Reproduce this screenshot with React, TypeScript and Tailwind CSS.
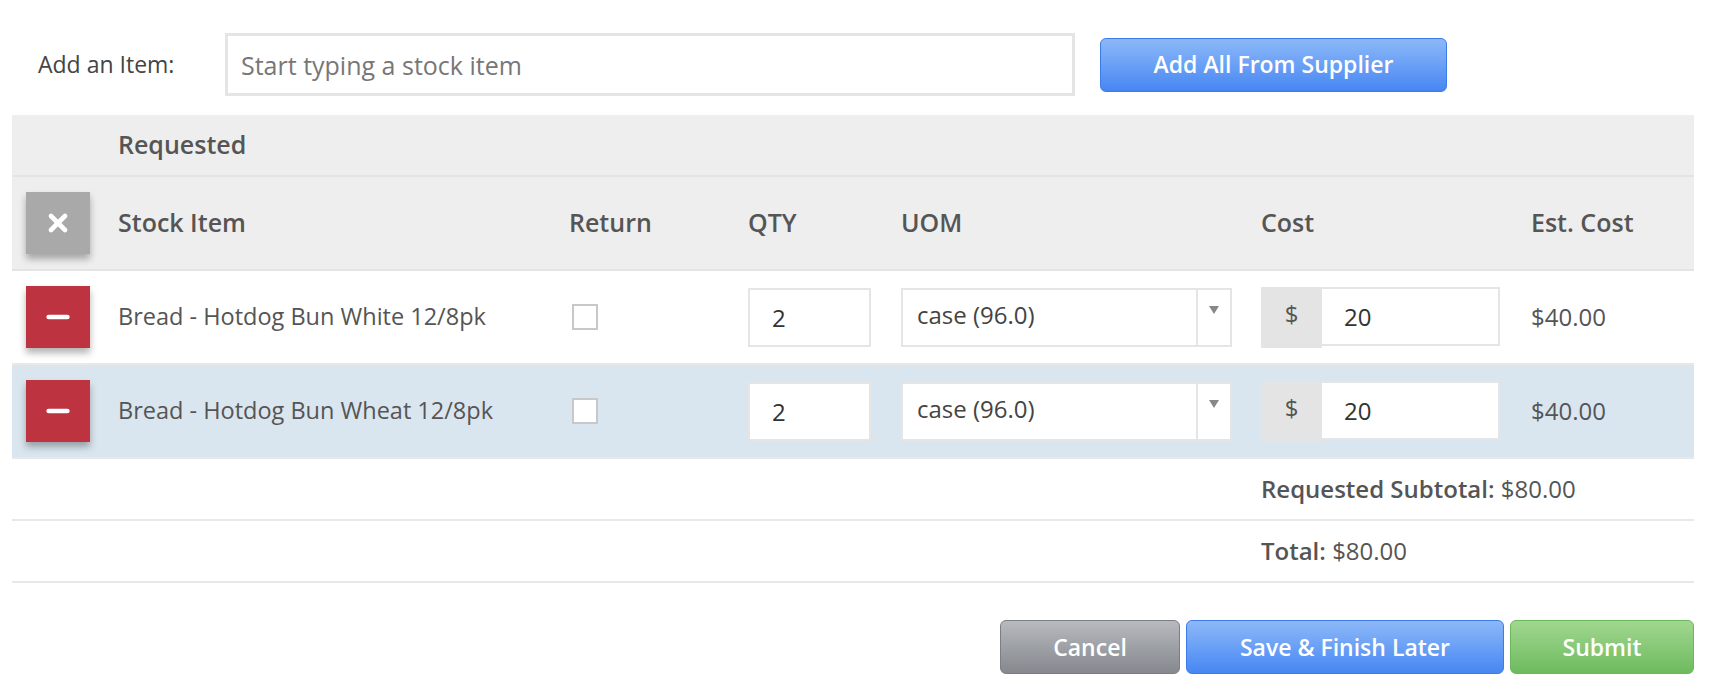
import { X, Minus } from 'lucide-react';

const cols = 'grid grid-cols-[106px_451px_179px_153px_360px_270px_1fr] items-center';

const items = [
    { name: 'Bread - Hotdog Bun White 12/8pk', qty: '2', uom: 'case (96.0)', cost: '20', est: '$40.00', bg: 'bg-white' },
    { name: 'Bread - Hotdog Bun Wheat 12/8pk', qty: '2', uom: 'case (96.0)', cost: '20', est: '$40.00', bg: 'bg-[#dae6ef]' },
];

export default function App() {
    return (
        <div className="w-[1712px] h-[698px] bg-white text-[#555] font-['Open_Sans',sans-serif] pl-[12px] pr-[18px] pt-[33px]">
            {/* add item bar */}
            <div className="flex items-center h-[63px]">
                <label className="w-[213px] pl-[26px] text-[23px] text-[#444]">Add an Item:</label>
                <input
                    placeholder="Start typing a stock item"
                    className="w-[850px] h-[63px] border-[3px] border-[#e5e5e5] px-[13px] text-[25px] text-[#333] placeholder:text-[#777] outline-none"
                />
                <button className="ml-[25px] w-[347px] h-[54px] rounded-[6px] border border-[#3d7be6] bg-gradient-to-b from-[#8cb8f8] to-[#4786f2] text-white text-[23px] font-semibold">
                    Add All From Supplier
                </button>
            </div>

            <div className="mt-[19px]">
                {/* header */}
                <div className="bg-[#eeeeee]">
                    <div className="h-[62px] flex items-center pl-[106px] border-b-2 border-[#e4e4e4] text-[25px] font-semibold">
                        Requested
                    </div>
                    <div className={`${cols} h-[94px] text-[25px] font-semibold border-b-2 border-[#e4e4e4]`}>
                        <div className="pl-[14px]">
                            <div className="w-[64px] h-[62px] bg-[#a9a9a9] flex items-center justify-center shadow-[0_5px_7px_rgba(0,0,0,0.3)]">
                                <X size={28} strokeWidth={4} className="text-white" />
                            </div>
                        </div>
                        <div>Stock Item</div>
                        <div>Return</div>
                        <div>QTY</div>
                        <div>UOM</div>
                        <div>Cost</div>
                        <div>Est. Cost</div>
                    </div>
                </div>

                {/* rows */}
                {items.map((it, i) => (
                    <div key={i} className={`${cols} h-[94px] ${it.bg} border-b-2 border-[#e8e8e8] text-[24px]`}>
                        <div className="pl-[14px]">
                            <div className="w-[64px] h-[62px] bg-[#be3340] flex items-center justify-center shadow-[0_5px_7px_rgba(0,0,0,0.3)]">
                                <Minus size={32} strokeWidth={3.5} className="text-white" />
                            </div>
                        </div>
                        <div className="text-[23.5px]">{it.name}</div>
                        <div className="pl-[3px]">
                            <div className="w-[26px] h-[26px] border-2 border-[#c8c8c8] bg-white" />
                        </div>
                        <div>
                            <input
                                defaultValue={it.qty}
                                className="w-[123px] h-[59px] border-2 border-[#e5e5e5] bg-white px-[22px] text-[24px] text-[#333] outline-none"
                            />
                        </div>
                        <div>
                            <div className="w-[331px] h-[59px] border-2 border-[#e5e5e5] bg-white flex">
                                <div className="flex-1 px-[14px] pt-[7px] text-[24px] text-[#444]">{it.uom}</div>
                                <div className="w-[34px] border-l-2 border-[#e5e5e5] flex justify-center pt-[16px]">
                                    <svg width="10" height="8" viewBox="0 0 10 8">
                                        <path d="M0 0 H10 L5 8 Z" fill="#888" />
                                    </svg>
                                </div>
                            </div>
                        </div>
                        <div className="flex items-start">
                            <div className="w-[61px] h-[61px] bg-[#e4e4e4] flex items-center justify-center text-[24px] text-[#555] pb-[6px]">
                                $
                            </div>
                            <input
                                defaultValue={it.cost}
                                className="w-[178px] h-[59px] border-2 border-l-0 border-[#e5e5e5] bg-white px-[22px] text-[24px] text-[#333] outline-none"
                            />
                        </div>
                        <div>{it.est}</div>
                    </div>
                ))}

                {/* totals */}
                <div className={`${cols} h-[62px] border-b-2 border-[#e8e8e8] text-[24px]`}>
                    <div className="col-start-6 col-span-2 whitespace-nowrap">
                        <span className="font-semibold">Requested Subtotal:</span> $80.00
                    </div>
                </div>
                <div className={`${cols} h-[62px] border-b-2 border-[#e8e8e8] text-[24px]`}>
                    <div className="col-start-6 col-span-2 whitespace-nowrap">
                        <span className="font-semibold">Total:</span> $80.00
                    </div>
                </div>
            </div>

            {/* actions */}
            <div className="flex justify-end gap-[6px] mt-[37px]">
                <button className="w-[180px] h-[54px] rounded-[6px] border border-[#7b7e84] bg-gradient-to-b from-[#b8babe] to-[#85888e] text-white text-[23px] font-semibold">
                    Cancel
                </button>
                <button className="w-[318px] h-[54px] rounded-[6px] border border-[#3d7be6] bg-gradient-to-b from-[#8cb8f8] to-[#4786f2] text-white text-[23px] font-semibold">
                    Save &amp; Finish Later
                </button>
                <button className="w-[184px] h-[54px] rounded-[6px] border border-[#6cb85c] bg-gradient-to-b from-[#a1d78f] to-[#6dbb5e] text-white text-[23px] font-semibold">
                    Submit
                </button>
            </div>
        </div>
    );
}
